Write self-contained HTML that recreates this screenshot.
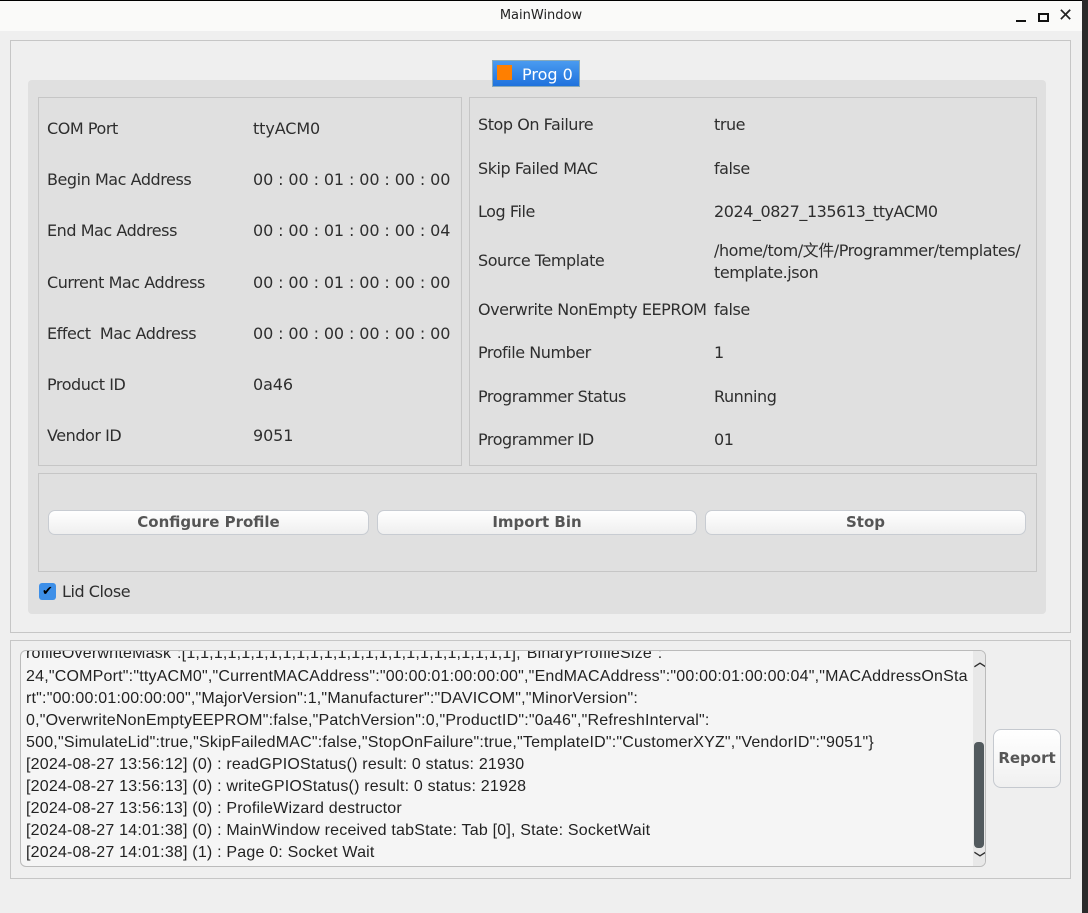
<!DOCTYPE html>
<html><head><meta charset="utf-8"><style>
*{margin:0;padding:0;box-sizing:border-box}
body{width:1088px;height:913px;background:#2b2b2b;font-family:"DejaVu Sans","Noto Sans CJK SC",sans-serif;color:#2e2e2e;position:relative;overflow:hidden}
.win{position:absolute;left:0;top:0;width:1082px;height:913px;background:#efefef}
.title{position:absolute;left:0;top:0;width:1082px;height:31px;background:#fafaf9;border-top:1px solid #000;font-size:13px;text-align:center;line-height:30px;color:#222}
.abs{position:absolute}
.box{position:absolute;border:1px solid #c6c6c6}
.lbl{position:absolute;font-size:16px;white-space:nowrap;letter-spacing:-0.1px}
.r{letter-spacing:-0.45px}
.btn{position:absolute;top:510px;height:25px;border:1px solid #c8ccd2;border-radius:7px;background:linear-gradient(#fff,#efefef);font-weight:bold;font-size:15px;color:#555;text-align:center;line-height:23px}
.log{position:absolute;left:20px;top:650px;width:966px;height:217px;background:#f5f5f5;border:1px solid #bbb;border-radius:6px;overflow:hidden;font-family:"Liberation Sans",sans-serif}
.log div{position:absolute;left:5px;font-size:16px;white-space:nowrap;color:#222;letter-spacing:0.2px}
</style></head><body>
<div class="win">
<div class="title">MainWindow
<span class="abs" style="left:1016px;top:19px;width:10px;height:2px;background:#111"></span>
<span class="abs" style="left:1038px;top:12px;width:11px;height:9px;border:2px solid #111"></span>
<span class="abs" style="left:1058px;top:3px;font-size:18px;font-weight:bold;line-height:24px">✕</span>
</div>
<div class="box" style="left:10px;top:40px;width:1061px;height:593px"></div>
<div class="abs" style="left:28px;top:80px;width:1018px;height:534px;background:#e0e0e0;border-radius:4px"></div>
<div class="abs" style="left:492px;top:60px;width:88px;height:27px;background:linear-gradient(#4a9bf0,#1f72dd);color:#fff;font-size:16px;line-height:27px;padding-left:29px;border:1px solid #8ab"><span class="abs" style="left:4px;top:4px;width:15px;height:15px;background:#ff7f00"></span>Prog 0</div>
<div class="box" style="left:38px;top:97px;width:424px;height:369px"></div>
<div class="box" style="left:469px;top:97px;width:568px;height:369px"></div>
<div class="box" style="left:38px;top:473px;width:999px;height:99px"></div>

<div class="lbl r" style="left:47px;top:119px">COM Port</div><div class="lbl" style="left:253px;top:119px">ttyACM0</div>
<div class="lbl r" style="left:47px;top:170px">Begin Mac Address</div><div class="lbl" style="left:253px;top:170px">00 : 00 : 01 : 00 : 00 : 00</div>
<div class="lbl r" style="left:47px;top:221px">End Mac Address</div><div class="lbl" style="left:253px;top:221px">00 : 00 : 01 : 00 : 00 : 04</div>
<div class="lbl r" style="left:47px;top:273px">Current Mac Address</div><div class="lbl" style="left:253px;top:273px">00 : 00 : 01 : 00 : 00 : 00</div>
<div class="lbl r" style="left:47px;top:324px">Effect&nbsp; Mac Address</div><div class="lbl" style="left:253px;top:324px">00 : 00 : 00 : 00 : 00 : 00</div>
<div class="lbl r" style="left:47px;top:375px">Product ID</div><div class="lbl" style="left:253px;top:375px">0a46</div>
<div class="lbl r" style="left:47px;top:426px">Vendor ID</div><div class="lbl" style="left:253px;top:426px">9051</div>

<div class="lbl r" style="left:478px;top:115px">Stop On Failure</div><div class="lbl r" style="left:714px;top:115px">true</div>
<div class="lbl r" style="left:478px;top:159px">Skip Failed MAC</div><div class="lbl r" style="left:714px;top:159px">false</div>
<div class="lbl r" style="left:478px;top:202px">Log File</div><div class="lbl r" style="left:714px;top:202px">2024_0827_135613_ttyACM0</div>
<div class="lbl r" style="left:478px;top:251px">Source Template</div><div class="lbl r" style="left:714px;top:240px;line-height:22px">/home/tom/文件/Programmer/templates/<br>template.json</div>
<div class="lbl r" style="left:478px;top:300px">Overwrite NonEmpty EEPROM</div><div class="lbl r" style="left:714px;top:300px">false</div>
<div class="lbl r" style="left:478px;top:343px">Profile Number</div><div class="lbl r" style="left:714px;top:343px">1</div>
<div class="lbl r" style="left:478px;top:387px">Programmer Status</div><div class="lbl r" style="left:714px;top:387px">Running</div>
<div class="lbl r" style="left:478px;top:430px">Programmer ID</div><div class="lbl r" style="left:714px;top:430px">01</div>

<div class="btn" style="left:48px;width:321px">Configure Profile</div>
<div class="btn" style="left:377px;width:320px">Import Bin</div>
<div class="btn" style="left:705px;width:321px">Stop</div>

<div class="abs" style="left:39px;top:583px;width:17px;height:17px;background:#3d8fe8;border-radius:3px;color:#000;font-size:13px;line-height:17px;text-align:center;font-weight:bold">✔</div>
<div class="lbl r" style="left:62px;top:582px">Lid Close</div>

<div class="box" style="left:10px;top:640px;width:1061px;height:239px"></div>
<div class="log">
<div style="top:-6px">rofileOverwriteMask":[1,1,1,1,1,1,1,1,1,1,1,1,1,1,1,1,1,1,1,1,1,1,1,1],"BinaryProfileSize":</div>
<div style="top:17px">24,"COMPort":"ttyACM0","CurrentMACAddress":"00:00:01:00:00:00","EndMACAddress":"00:00:01:00:00:04","MACAddressOnSta</div>
<div style="top:39px">rt":"00:00:01:00:00:00","MajorVersion":1,"Manufacturer":"DAVICOM","MinorVersion":</div>
<div style="top:61px">0,"OverwriteNonEmptyEEPROM":false,"PatchVersion":0,"ProductID":"0a46","RefreshInterval":</div>
<div style="top:83px">500,"SimulateLid":true,"SkipFailedMAC":false,"StopOnFailure":true,"TemplateID":"CustomerXYZ","VendorID":"9051"}</div>
<div style="top:105px">[2024-08-27 13:56:12] (0) : readGPIOStatus() result: 0 status: 21930</div>
<div style="top:127px">[2024-08-27 13:56:13] (0) : writeGPIOStatus() result: 0 status: 21928</div>
<div style="top:149px">[2024-08-27 13:56:13] (0) : ProfileWizard destructor</div>
<div style="top:171px">[2024-08-27 14:01:38] (0) : MainWindow received tabState: Tab [0], State: SocketWait</div>
<div style="top:193px">[2024-08-27 14:01:38] (1) : Page 0: Socket Wait</div>
<span class="abs" style="left:952px;top:0;width:12px;height:215px;background:#e8e8e8"></span>
<span class="abs" style="left:953px;top:2px;font-size:12px;font-weight:bold">︿</span>
<span class="abs" style="left:953px;top:91px;width:10px;height:106px;background:#525a5e;border-radius:4px"></span>
<span class="abs" style="left:953px;top:198px;font-size:12px;font-weight:bold">﹀</span>
</div>
<div class="abs" style="left:993px;top:729px;width:68px;height:59px;border:1px solid #c5c9cf;border-radius:8px;background:linear-gradient(#fff,#f0f0f0);font-weight:bold;font-size:15px;color:#555;text-align:center;line-height:57px">Report</div>
</div>
</body></html>
